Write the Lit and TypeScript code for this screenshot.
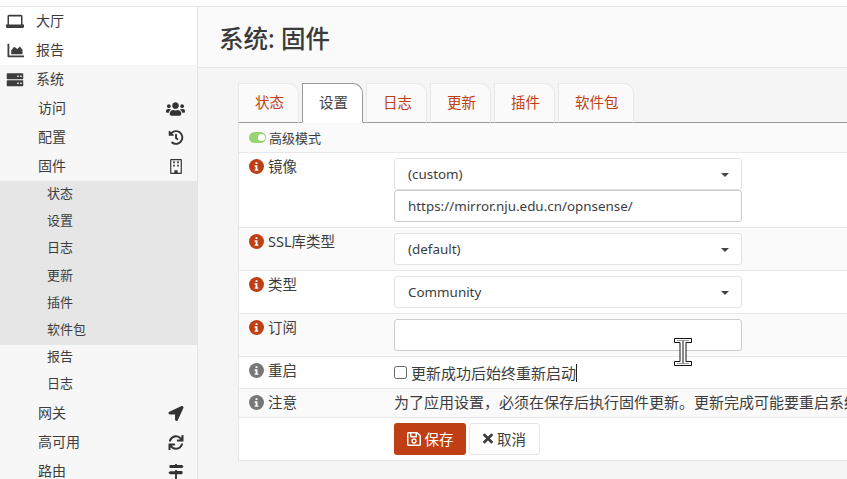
import { LitElement, html, css } from "lit";
import { customElement } from "lit/decorators.js";

const ic = (vb: string, d: string, cls = "ic") =>
  html`<svg class=${cls} viewBox=${vb} fill="currentColor"><path d=${d}></path></svg>`;

const I = {
  laptop: ic("0 0 24 20", "M4 1h16a2 2 0 0 1 2 2v11h2v2.5a2 2 0 0 1-2 2H2a2 2 0 0 1-2-2V14h2V3a2 2 0 0 1 2-2zm0 2.2V14h16V3.2H4z"),
  chart: ic("0 0 24 20", "M2 1h2.4v15.6H24V19H3.5A1.5 1.5 0 0 1 2 17.5V1zM7 15V9.5l4-4.5 4 3 3.5-3.5L22 9v6H7z"),
  server: ic("0 0 24 20", "M2 1.5h20a1 1 0 0 1 1 1v6a1 1 0 0 1-1 1H2a1 1 0 0 1-1-1v-6a1 1 0 0 1 1-1zm13 3v2h2v-2h-2zm4 0v2h2v-2h-2zM2 11h20a1 1 0 0 1 1 1v6a1 1 0 0 1-1 1H2a1 1 0 0 1-1-1v-6a1 1 0 0 1 1-1zm13 3v2h2v-2h-2zm4 0v2h2v-2h-2z"),
  users: ic("0 0 640 512", "M96 224c35.3 0 64-28.7 64-64s-28.7-64-64-64-64 28.7-64 64 28.7 64 64 64zm448 0c35.3 0 64-28.7 64-64s-28.7-64-64-64-64 28.7-64 64 28.7 64 64 64zm32 32h-64c-17.6 0-33.5 7.1-45.1 18.6 40.3 22.1 68.9 62 75.1 109.4h66c17.7 0 32-14.3 32-32v-32c0-35.3-28.7-64-64-64zm-256 0c61.9 0 112-50.1 112-112S381.9 32 320 32 208 82.1 208 144s50.1 112 112 112zm76.8 32h-8.3c-20.8 10-43.9 16-68.5 16s-47.6-6-68.5-16h-8.3C179.6 288 128 339.6 128 403.2V432c0 26.5 21.5 48 48 48h288c26.5 0 48-21.5 48-48v-28.8c0-63.6-51.6-115.2-115.2-115.2zm-223.7-13.4C161.5 263.1 145.6 256 128 256H64c-35.3 0-64 28.7-64 64v32c0 17.7 14.3 32 32 32h65.9c6.3-47.4 34.9-87.3 75.2-109.4z", "ic users"),
  history: ic("0 0 512 512", "M504 255.531c.253 136.64-111.18 248.372-247.82 248.468-59.015.042-113.223-20.53-155.822-54.911-11.077-8.94-11.905-25.541-1.839-35.607l11.267-11.267c8.609-8.609 22.353-9.551 31.891-1.984C173.062 425.135 212.781 440 256 440c101.705 0 184-82.311 184-184 0-101.705-82.311-184-184-184-48.814 0-93.149 18.969-126.068 49.932l50.754 50.754c10.08 10.08 2.941 27.314-11.313 27.314H24c-8.837 0-16-7.163-16-16V38.627c0-14.254 17.234-21.393 27.314-11.314l49.372 49.372C129.209 34.136 189.552 8 256 8c136.81 0 247.747 110.78 248 247.531zm-180.912 78.784l9.823-12.63c8.138-10.463 6.253-25.542-4.21-33.679L288 256.349V152c0-13.255-10.745-24-24-24h-16c-13.255 0-24 10.745-24 24v135.651l65.409 50.874c10.463 8.137 25.541 6.253 33.679-4.21z"),
  building: ic("0 0 448 512", "M60 0h328c20 0 36 16 36 36v440c0 20-16 36-36 36H60c-20 0-36-16-36-36V36C24 16 40 0 60 0zm4 40v432h104v-72c0-10 8-16 16-16h80c8 0 16 6 16 16v72h104V40H64zm64 40h56v64h-56V80zm136 0h56v64h-56V80zm-136 112h56v64h-56v-64zm136 0h56v64h-56v-64z"),
  arrow: ic("0 0 512 512", "M444.52 3.52L28.74 195.42c-47.97 22.39-31.98 92.75 19.19 92.75h175.91v175.91c0 51.17 70.36 67.17 92.75 19.19l191.9-415.78c15.99-38.39-25.59-79.97-63.97-63.97z"),
  sync: ic("0 0 512 512", "M440.65 12.57l4 82.77A247.16 247.16 0 0 0 255.83 8C134.73 8 33.91 94.92 12.29 209.82A12 12 0 0 0 24.09 224h49.05a12 12 0 0 0 11.67-9.26 175.91 175.91 0 0 1 317-56.94l-101.46-4.86a12 12 0 0 0-12.57 12v47.41a12 12 0 0 0 12 12H500a12 12 0 0 0 12-12V12a12 12 0 0 0-12-12h-47.37a12 12 0 0 0-11.98 12.57zM255.83 432a175.61 175.61 0 0 1-146-77.8l101.8 4.87a12 12 0 0 0 12.57-12v-47.4a12 12 0 0 0-12-12H12a12 12 0 0 0-12 12V500a12 12 0 0 0 12 12h47.35a12 12 0 0 0 12-12.6l-4.15-82.57A247.17 247.17 0 0 0 255.83 504c121.11 0 221.93-86.92 243.55-201.82a12 12 0 0 0-11.8-14.18h-49.05a12 12 0 0 0-11.67 9.26A175.86 175.86 0 0 1 255.83 432z"),
  signs: ic("0 0 512 512", "M224 0h64v32h170c6 0 11 3 15 7l35 38c4 5 4 11 0 16l-35 38c-4 4-9 7-15 7H56c-13 0-24-11-24-24V56c0-13 11-24 24-24h168V0zm0 208h64v32h168c13 0 24 11 24 24v64c0 13-11 24-24 24H288v160h-64V352H54c-6 0-11-3-15-7L4 307c-4-5-4-11 0-16l35-38c4-4 9-7 15-7h170v-38z"),
  save: ic("0 0 448 512", "M433.941 129.941l-83.882-83.882A48 48 0 0 0 316.118 32H48C21.49 32 0 53.49 0 80v352c0 26.51 21.49 48 48 48h352c26.51 0 48-21.49 48-48V163.882a48 48 0 0 0-14.059-33.941zM272 80v80H144V80h128zm122 352H54a6 6 0 0 1-6-6V86a6 6 0 0 1 6-6h42v104c0 13.255 10.745 24 24 24h176c13.255 0 24-10.745 24-24V83.882l78.243 78.243a6 6 0 0 1 1.757 4.243V426a6 6 0 0 1-6 6zM224 232c-48.523 0-88 39.477-88 88s39.477 88 88 88 88-39.477 88-88-39.477-88-88-88zm0 128c-22.056 0-40-17.944-40-40s17.944-40 40-40 40 17.944 40 40-17.944 40-40 40z", "bi sv"),
  times: ic("0 0 352 512", "M242.72 256l100.07-100.07c12.28-12.28 12.28-32.19 0-44.48l-22.24-22.24c-12.28-12.28-32.19-12.28-44.48 0L176 189.28 75.93 89.21c-12.28-12.28-32.19-12.28-44.48 0L9.21 111.45c-12.28 12.28-12.28 32.19 0 44.48L109.28 256 9.21 356.07c-12.28 12.28-12.28 32.19 0 44.48l22.24 22.24c12.28 12.28 32.2 12.28 44.48 0L176 322.72l100.07 100.07c12.28 12.28 32.2 12.28 44.48 0l22.24-22.24c12.28-12.28 12.28-32.19 0-44.48L242.72 256z", "bi tm"),
};

const info = (grey = false) => html`<svg class="info ${grey ? "grey" : ""}" viewBox="0 0 16 16"><circle cx="8" cy="8" r="8" fill="currentColor"></circle><path fill="#fff" d="M7 3.4h2v1.9H7zM6 6.7h3v4.4h1v1.5H6v-1.5h1V8.2H6z"></path></svg>`;

@customElement("app-root")
export class AppRoot extends LitElement {
  static styles = css`
    :host { display: block; width: 847px; height: 479px; overflow: hidden; position: relative; background: #fff;
      font-family: "Noto Sans", "Noto Sans CJK SC", sans-serif; color: #3d3d3d; }
    * { box-sizing: border-box; }
    .page { display: flex; height: 479px; padding-top: 6px; }
    .shell { display: flex; flex: 1; min-width: 0; border-top: 1px solid #e5e5e5; }
    .side { width: 198px; flex: none; border-right: 1px solid #e5e5e5; background: #fff; font-size: 14px; overflow: hidden; }
    .r { display: flex; align-items: center; height: 29px; position: relative; padding-bottom: 3px; flex: none; }
    .top { padding-left: 36px; }
    .top .ic { position: absolute; left: 6px; top: 7px; width: 18px; height: 15px; }
    .sys { background: #f7f7f7; }
    .l2 { padding: 0 13px 3px 38px; justify-content: space-between; }
    .l2 .ic { width: 16px; height: 15px; margin-top: 3px; color: #333; }
    .l2 .ic.users { width: 19px; height: 16px; margin-right: -1px; }
    .fw { background: #e6e6e6; }
    .s { display: flex; align-items: center; height: 27px; padding: 0 0 5px 47px; font-size: 13px; }
    .fw .s { height: 27.33px; }
    .main { flex: 1; min-width: 0; background: #f5f5f5; overflow: hidden; }
    .hd { height: 61px; background: #fafafa; border-bottom: 1px solid #e5e5e5; display: flex; align-items: center; padding: 5px 0 0 21px; }
    h1 { margin: 0; font-size: 24.5px; font-weight: 500; line-height: 1; color: #3a3a3a; }
    .wrap { margin: 15px 0 0 40px; width: 800px; }
    .tabs { display: flex; gap: 3px; height: 40px; border-bottom: 1px solid #999; font-size: 14.5px; color: #c03e14; }
    .tab { height: 40px; padding: 0 14px 3px 16px; display: flex; align-items: center; justify-content: center; background: #fafafa; border: 1px solid #e8e8e8; border-bottom: 1px solid #999; border-radius: 0 10px 0 0; }
    .tab.on { background: #fff; color: #444; border-color: #999; border-bottom-color: #fff; }
    .panel { border-left: 1px solid #e5e5e5; border-bottom: 1px solid #e5e5e5; background: #fff; font-size: 15px; }
    .row { display: grid; grid-template-columns: 155px 1fr; border-bottom: 1px solid #e8e8e8; }
    .row.alt { background: #fafafa; }
    .row:last-child { border-bottom: 0; }
    .adv { height: 30px; display: flex; align-items: center; padding-left: 10px; background: #fafafa; border-bottom: 1px solid #e8e8e8; font-size: 13px; gap: 3px; }
    .tog { width: 17px; height: 11px; border-radius: 5.5px; background: #98d46f; position: relative; }
    .tog::after { content: ""; position: absolute; right: 1.5px; top: 2px; width: 7px; height: 7px; background: #fff; border-radius: 50%; }
    .lab { display: flex; align-items: flex-start; padding: 3px 0 0 10px; gap: 4px; font-size: 14.5px; line-height: 20px; }
    .info { width: 15px; height: 15px; color: #c03e14; flex: none; margin-top: 2.5px; }
    .info.grey { color: #777; }
    .ctl { padding: 5px 0; font-size: 13.4px; }
    .sel, .inp { width: 348px; height: 32px; border: 1px solid #e3e3e3; border-radius: 3px; background: #fff; display: flex; align-items: center; padding: 0 0 0 13px; position: relative; }
    .inp { border-color: #ccc; }
    .sel::after { content: ""; position: absolute; right: 12px; top: 14px; border: 4px solid transparent; border-top: 4px solid #444; border-bottom: 0; }
    .chk { display: flex; align-items: center; font-size: 15px; height: 21px; }
    .box { width: 13px; height: 13px; border: 1px solid #666; border-radius: 2.5px; background: #fff; margin-right: 4px; }
    .caret { display: inline-block; width: 1px; height: 18px; background: #222; }
    .note { font-size: 15px; line-height: 20px; white-space: nowrap; padding: 3px 0 5px; }
    .btns { display: flex; gap: 3px; }
    .btn { height: 32px; border-radius: 3px; display: flex; align-items: center; justify-content: center; gap: 4px; font-size: 14.5px; padding-bottom: 1px; }
    .save { width: 72px; background: #c03e14; color: #fff; }
    .cancel { width: 71px; background: #fff; border: 1px solid #e5e5e5; }
    .sv { height: 16px; width: 14px; }
    .tm { height: 15px; width: 10px; }
    .cursor { position: absolute; left: 674px; top: 338px; width: 18px; height: 28px; }
  `;

  render() {
    return html`<div class="page"><div class="shell">
      <nav class="side">
        <div class="r top">${I.laptop}大厅</div>
        <div class="r top">${I.chart}报告</div>
        <div class="sys">
          <div class="r top">${I.server}系统</div>
          <div class="r l2"><span>访问</span>${I.users}</div>
          <div class="r l2"><span>配置</span>${I.history}</div>
          <div class="r l2"><span>固件</span>${I.building}</div>
          <div class="fw">
            ${["状态", "设置", "日志", "更新", "插件", "软件包"].map((t) => html`<div class="s">${t}</div>`)}
          </div>
          <div class="s">报告</div>
          <div class="s">日志</div>
          <div class="r l2"><span>网关</span>${I.arrow}</div>
          <div class="r l2"><span>高可用</span>${I.sync}</div>
          <div class="r l2"><span>路由</span>${I.signs}</div>
        </div>
      </nav>
      <main class="main">
        <div class="hd"><h1>系统: 固件</h1></div>
        <div class="wrap">
          <div class="tabs">
            ${["状态", "设置", "日志", "更新", "插件", "软件包"].map((t, i) => html`<div class="tab ${i === 1 ? "on" : ""}">${t}</div>`)}
          </div>
          <div class="panel">
            <div class="adv"><span class="tog"></span>高级模式</div>
            <div class="row">
              <div class="lab">${info()}镜像</div>
              <div class="ctl"><div class="sel">(custom)</div><div class="inp">https://mirror.nju.edu.cn/opnsense/</div></div>
            </div>
            <div class="row alt">
              <div class="lab">${info()}SSL库类型</div>
              <div class="ctl"><div class="sel">(default)</div></div>
            </div>
            <div class="row">
              <div class="lab">${info()}类型</div>
              <div class="ctl"><div class="sel">Community</div></div>
            </div>
            <div class="row alt">
              <div class="lab">${info()}订阅</div>
              <div class="ctl"><div class="inp"></div></div>
            </div>
            <div class="row">
              <div class="lab">${info(true)}重启</div>
              <div class="ctl"><div class="chk"><span class="box"></span>更新成功后始终重新启动<span class="caret"></span></div></div>
            </div>
            <div class="row alt">
              <div class="lab">${info(true)}注意</div>
              <div class="ctl note">为了应用设置，必须在保存后执行固件更新。更新完成可能要重启系统。</div>
            </div>
            <div class="row">
              <div></div>
              <div class="ctl btns">
                <div class="btn save">${I.save}保存</div>
                <div class="btn cancel">${I.times}取消</div>
              </div>
            </div>
          </div>
        </div>
      </main>
    </div></div>
    <svg class="cursor" viewBox="0 0 18 28">
      <path fill="#fff" stroke="#111" stroke-width="1" d="M.5.5h17v4h-5.5v19h5.5v4H.5v-4H6v-19H.5z"></path>
      <path fill="none" stroke="#999" stroke-width="1" d="M3 2.5h12M3 25.5h12"></path>
      <path fill="#888" d="M8 3h2v22H8z"></path>
    </svg>`;
  }
}
